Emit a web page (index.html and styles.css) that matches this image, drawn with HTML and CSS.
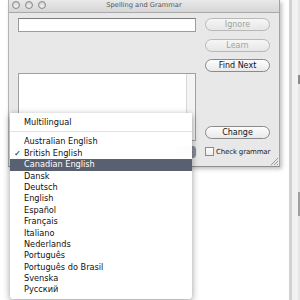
FILE: index.html
```html
<!DOCTYPE html>
<html lang="en">
<head>
    <meta charset="UTF-8">
    <title>Spelling and Grammar</title>
    <link rel="stylesheet" href="styles.css">
</head>
<body>
    <div class="screen">
        <div class="window">
            <div class="titlebar">
                <div class="lights"><span></span><span></span><span></span></div>
                <div class="title">Spelling and Grammar</div>
            </div>
            <div class="panel">
                <div class="left">
                    <div class="field"></div>
                    <div class="list"><div class="scroller"></div></div>
                    <div class="popup"></div>
                </div>
                <div class="right">
                    <div class="btn off">Ignore</div>
                    <div class="btn off learn">Learn</div>
                    <div class="btn find">Find Next</div>
                    <div class="btn change">Change</div>
                    <div class="check"><span class="box"></span>Check grammar</div>
                </div>
            </div>
            <svg class="grip" width="8" height="8" viewBox="0 0 8 8">
                <path d="M1 8 L8 1 M4 8 L8 4 M7 8 L8 7" stroke="#9a9a9a" stroke-width="1" fill="none"/>
            </svg>
        </div>
        <div class="other"><div class="edge"></div></div>
    </div>

    <!-- the open language menu -->
    <ul class="menu">
        <li>Multilingual</li>
        <li class="sep"></li>
        <li>Australian English</li>
        <li class="on">British English</li>
        <li class="hi">Canadian English</li>
        <li>Dansk</li>
        <li>Deutsch</li>
        <li>English</li>
        <li>Español</li>
        <li>Français</li>
        <li>Italiano</li>
        <li>Nederlands</li>
        <li>Português</li>
        <li>Português do Brasil</li>
        <li>Svenska</li>
        <li>Русский</li>
    </ul>
</body>
</html>
```

FILE: styles.css
```css
body{
    margin: 0;
    background: #fff;
    font-family: "DejaVu Sans", sans-serif;
    font-size: 8px;
    color: #111;
    position: relative;
    width: 300px;
    height: 300px;
    overflow: hidden;
}
.screen{
    display: flex;
    align-items: flex-start;
}
.window{
    position: relative;
    margin-left: 8px;
    width: 270px;
    height: 166px;
    background: #e8e8e8;
    border-left: 1px solid #b4b4b4;
    border-right: 1px solid #a2a2a2;
    border-bottom: 1px solid #8e8e8e;
    box-shadow: 2px 2px 4px rgba(0,0,0,.25);
}
.titlebar{
    height: 12px;
    border-bottom: 1px solid #a9a9a9;
    background: linear-gradient(#e9e9e9, #d6d6d6);
    position: relative;
}
.lights{
    display: flex;
    gap: 5px;
    padding: 1px 0 0 3px;
}
.lights span{
    width: 6px;
    height: 6px;
    border-radius: 50%;
    border: 1px solid #8a8a8a;
    background: radial-gradient(circle at 50% 70%, #f4f4f4, #c4c4c4);
}
.title{
    position: absolute;
    left: 0;
    right: 0;
    top: 1px;
    text-align: center;
    font-size: 6.7px;
    color: #555;
}
.panel{
    display: flex;
    gap: 9px;
    padding: 5px 9px 0 9px;
}
.left{
    width: 178px;
}
.field{
    height: 12px;
    background: #fff;
    border: 1px solid #9c9c9c;
    border-top-color: #7d7d7d;
}
.list{
    margin-top: 41px;
    height: 66px;
    background: #fff;
    border: 1px solid #a0a0a0;
    display: flex;
    justify-content: flex-end;
}
.scroller{
    width: 8px;
    background: #f4f4f4;
    border-left: 1px solid #d8d8d8;
}
.popup{
    margin-top: 5px;
    height: 10px;
    border: 1px solid #8a8a8a;
    border-radius: 3px;
    background: linear-gradient(to right, #f4f4f4 90%, #8b919c 90%);
}
.right{
    width: 65px;
    display: flex;
    flex-direction: column;
}
.btn{
    height: 11px;
    line-height: 11px;
    border: 1px solid #8a8a8a;
    border-radius: 7px;
    background: linear-gradient(#fdfdfd, #e9e9e9);
    text-align: center;
    color: #111;
}
.btn.off{
    border-color: #b8b8b8;
    color: #a2a2a2;
    background: linear-gradient(#f6f6f6, #e6e6e6);
}
.learn{
    margin-top: 8px;
}
.find{
    margin-top: 7px;
}
.change{
    margin-top: 54px;
}
.check{
    margin-top: 8px;
    display: flex;
    align-items: center;
    gap: 2px;
    white-space: nowrap;
    font-size: 7px;
    letter-spacing: -0.15px;
    color: #222;
}
.box{
    flex: none;
    width: 7px;
    height: 7px;
    border: 1px solid #8a8a8a;
    background: linear-gradient(#fff, #ececec);
}
.grip{
    position: absolute;
    right: 1px;
    bottom: 1px;
}
.other{
    margin-left: 9px;
    width: 11px;
    height: 300px;
    border-left: 3px solid #d2d2d2;
    background: #f2f2f2;
    display: flex;
    justify-content: flex-end;
}
.edge{
    width: 2px;
    background: linear-gradient(#e6e6e6 25%, #8a8a8a 25%, #8a8a8a 28%, #e6e6e6 28%, #e6e6e6 64%, #a0a0a0 64%, #a0a0a0 72%, #e6e6e6 72%);
}
.menu{
    position: absolute;
    left: 10px;
    top: 113px;
    width: 182px;
    margin: 0;
    padding: 4px 0 3px 0;
    list-style: none;
    background: rgba(255,255,255,.98);
    border-radius: 0 0 4px 4px;
    box-shadow: 0 2px 7px rgba(0,0,0,.4);
}
.menu li{
    position: relative;
    height: 11.4px;
    line-height: 11.4px;
    padding-left: 14px;
    font-size: 8.2px;
    color: #111;
    white-space: nowrap;
}
.menu li.sep{
    height: 1px;
    margin: 3px 0 4px 0;
    background: #e2e2e2;
}
.menu li.on::before{
    content: "✓";
    position: absolute;
    left: 4px;
}
.menu li.hi{
    background: #596070;
    color: #fff;
}
```
